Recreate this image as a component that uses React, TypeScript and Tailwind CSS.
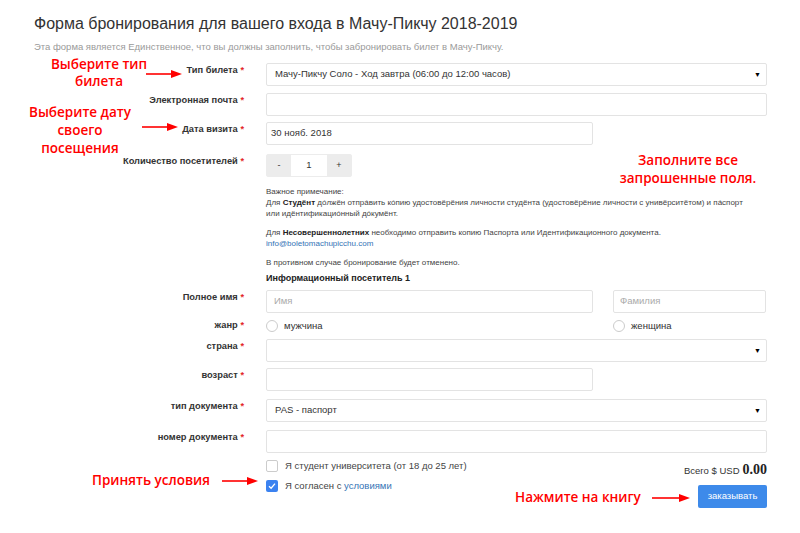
import React from "react";

const label = "text-right pr-[2px] pt-[1px] text-[9.3px] font-bold text-[#333] leading-[12px]";
const box = "h-[23px] border border-[#e3e3e3] rounded-[2px] bg-white";

function Req({ text }: { text: string }) {
  return (
    <div className={label}>
      {text} <span className="text-[#e3262a]">*</span>
    </div>
  );
}

function Caret() {
  return <span className="text-[7px] text-black leading-none">▼</span>;
}

function Arrow({ w = 36 }: { w?: number }) {
  return (
    <svg width={w} height="10" viewBox={`0 0 ${w} 10`}>
      <line x1="0" y1="5" x2={w - 9} y2="5" stroke="#ff0000" strokeWidth="1.6" />
      <polygon points={`${w - 11},1 ${w},5 ${w - 11},9`} fill="#ff0000" />
    </svg>
  );
}

export default function App() {
  return (
    <div
      className="relative w-[800px] h-[533px] bg-white overflow-hidden"
      style={{ fontFamily: '"Liberation Sans", Arial, sans-serif' }}
    >
      <div className="pl-[34px] pt-[14px]">
        <h1 className="text-[16px] leading-[20px] text-[#333]">
          Форма бронирования для вашего входа в Мачу-Пикчу 2018-2019
        </h1>
        <p className="mt-[6px] text-[9.5px] leading-[14px] text-[#9a9a9a]">
          Эта форма является Единственное, что вы должны заполнить, чтобы забронировать билет в Мачу-Пикчу.
        </p>

        <div className="mt-[9px] grid grid-cols-[212px_501px] gap-x-[20px] text-[9.5px] text-[#333]">
          {/* ticket */}
          <Req text="Тип билета" />
          <div className={`${box} flex items-center justify-between pl-[8px] pr-[5px]`}>
            <span>Мачу-Пикчу Соло - Ход завтра (06:00 до 12:00 часов)</span>
            <Caret />
          </div>

          {/* email */}
          <div className="col-span-2 h-[7px]" />
          <Req text="Электронная почта" />
          <div className={box} />

          {/* date */}
          <div className="col-span-2 h-[6px]" />
          <Req text="Дата визита" />
          <div className={`${box} w-[327px] flex items-center pl-[4px]`}>30 нояб. 2018</div>

          {/* quantity */}
          <div className="col-span-2 h-[9px]" />
          <Req text="Количество посетителей" />
          <div className="flex flex-col">
            <div className="flex h-[23px] w-[86px] border border-[#ececec] rounded-[2px]">
              <div className="w-[24px] bg-[#ececec] flex items-center justify-center text-[9px]">-</div>
              <div className="flex-1 bg-white flex items-center justify-center">1</div>
              <div className="w-[24px] bg-[#ececec] flex items-center justify-center text-[9px]">+</div>
            </div>

            <div className="mt-[9px] text-[8px] leading-[11px] text-[#444] whitespace-nowrap">
              <p>Важное примечание:</p>
              <p>
                Для <b className="text-[#222]">Студёнт</b> дóлжён отпрáвить кóпию удостовёрёния личности студёнта (удостовёрёние личности с унивёрситётом) и пáспорт
              </p>
              <p>или идёнтификациóнный дóкумёнт.</p>
              <p className="mt-[8px]">
                Для <b className="text-[#222]">Несовершеннолетних</b> необходимо отправить копию Паспорта или Идентификационного документа.
              </p>
              <p className="text-[#3473b5]">info@boletomachupicchu.com</p>
              <p className="mt-[8px]">В противном случае бронирование будет отменено.</p>
              <p className="mt-[3px] text-[9px] leading-[14px] font-bold text-[#222]">Информационный посетитель 1</p>
            </div>
          </div>

          {/* full name */}
          <div className="col-span-2 h-[5px]" />
          <Req text="Полное имя" />
          <div className="grid grid-cols-[327px_153px] gap-x-[20px]">
            <div className={`${box} flex items-center pl-[7px] text-[#aaa]`}>Имя</div>
            <div className={`${box} flex items-center pl-[6px] text-[#aaa]`}>Фамилия</div>
          </div>

          {/* gender */}
          <div className="col-span-2 h-[5px]" />
          <Req text="жанр" />
          <div className="grid grid-cols-[327px_153px] gap-x-[20px] h-[16px] items-center">
            <div className="flex items-center gap-[6px]">
              <span className="w-[12px] h-[12px] rounded-full border border-[#ccc] bg-white" />
              <span>мужчина</span>
            </div>
            <div className="flex items-center gap-[6px]">
              <span className="w-[12px] h-[12px] rounded-full border border-[#ccc] bg-white" />
              <span>женщина</span>
            </div>
          </div>

          {/* country */}
          <div className="col-span-2 h-[5px]" />
          <Req text="страна" />
          <div className={`${box} flex items-center justify-end pr-[5px]`}>
            <Caret />
          </div>

          {/* age */}
          <div className="col-span-2 h-[6px]" />
          <Req text="возраст" />
          <div className={`${box} w-[327px]`} />

          {/* document type */}
          <div className="col-span-2 h-[8px]" />
          <Req text="тип документа" />
          <div className={`${box} flex items-center justify-between pl-[8px] pr-[5px]`}>
            <span>PAS - паспорт</span>
            <Caret />
          </div>

          {/* document number */}
          <div className="col-span-2 h-[8px]" />
          <Req text="номер документа" />
          <div className={box} />

          {/* terms + total */}
          <div className="col-span-2 h-[6px]" />
          <div />
          <div className="flex justify-between">
            <div className="flex flex-col gap-[6px] text-[#444]">
              <div className="flex items-center gap-[7px]">
                <span className="w-[12px] h-[12px] rounded-[2px] border border-[#ccc] bg-white" />
                <span>Я студент университета (от 18 до 25 лет)</span>
              </div>
              <div className="flex items-center gap-[7px]">
                <span className="w-[12px] h-[12px] rounded-[2px] bg-[#3b82f0] flex items-center justify-center">
                  <svg width="8" height="8" viewBox="0 0 8 8">
                    <path d="M1 4.2 L3.1 6.2 L7 1.6" fill="none" stroke="#fff" strokeWidth="1.3" />
                  </svg>
                </span>
                <span>
                  Я согласен с <span className="text-[#3473b5]">условиями</span>
                </span>
              </div>
            </div>
            <div className="flex flex-col items-end">
              <div className="flex items-baseline gap-[3px] text-[#333]">
                <span>Всего $ USD</span>
                <span
                  className="text-[14px] font-bold text-[#222]"
                  style={{ fontFamily: '"Liberation Serif", serif' }}
                >
                  0.00
                </span>
              </div>
              <button className="mt-[5px] w-[69px] h-[23px] rounded-[2px] bg-[#3d8aea] text-white text-[9.5px]">
                заказывать
              </button>
            </div>
          </div>
        </div>
      </div>

      {/* annotations */}
      <div
        className="absolute inset-0 pointer-events-none text-[#ff0000] text-[13.5px] font-semibold leading-[17px]"
        style={{ fontFamily: '"Open Sans", "Noto Sans", sans-serif' }}
      >
        <div className="absolute left-[39px] top-[56px] w-[120px] text-center">Выберите тип<br />билета</div>
        <div className="absolute left-[146px] top-[69px]"><Arrow /></div>

        <div className="absolute left-[20px] top-[103px] w-[120px] text-center leading-[18px]">
          Выберите дату<br />своего<br />посещения
        </div>
        <div className="absolute left-[142px] top-[122px]"><Arrow /></div>

        <div className="absolute left-[608px] top-[151px] w-[160px] text-center leading-[18px]">
          Заполните все<br />запрошенные поля.
        </div>

        <div className="absolute left-[92px] top-[472px]">Принять условия</div>
        <div className="absolute left-[222px] top-[476px]"><Arrow /></div>

        <div className="absolute left-[515px] top-[489px]">Нажмите на книгу</div>
        <div className="absolute left-[652px] top-[493px]"><Arrow w={38} /></div>
      </div>
    </div>
  );
}
